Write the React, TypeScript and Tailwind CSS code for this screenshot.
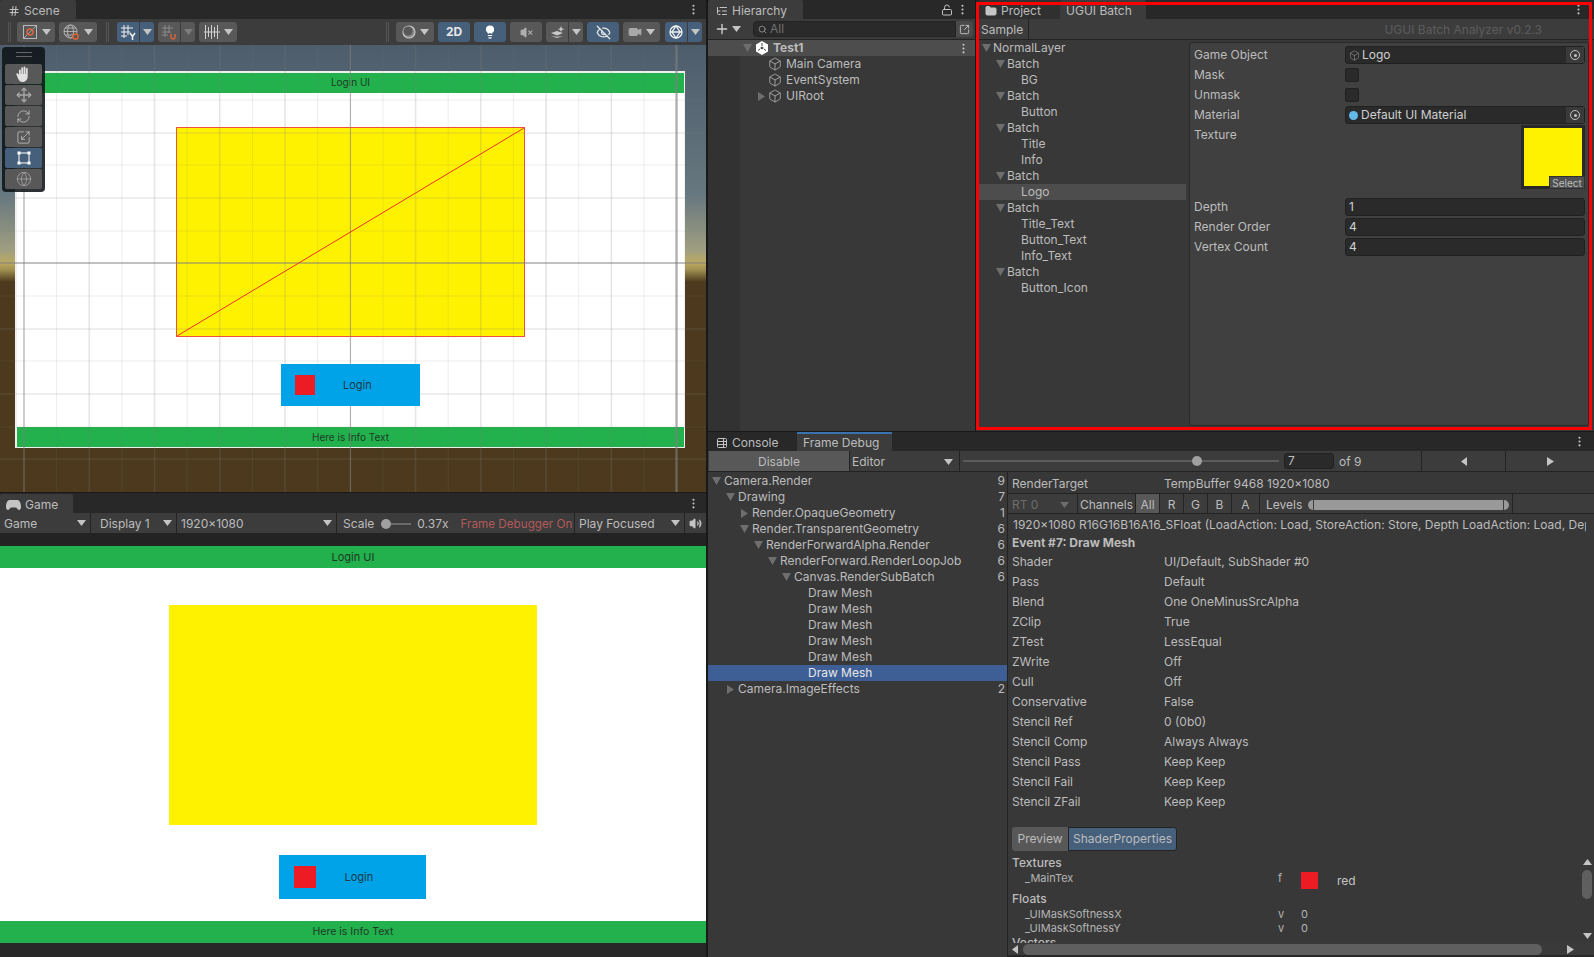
import { ReactNode } from 'react';
import { Box, EllipsisVertical, Hash, ListTree, LockOpen, Plus, Search, Folder, SquareArrowOutUpRight, Volume2, TableProperties, Move, RefreshCw, Scaling, Video, EyeOff, Lightbulb, VolumeX, Globe } from 'lucide-react';

function Down({ className = 'fill-[#c4c4c4]' }: { className?: string }) {
  return (
    <svg width="9" height="6" viewBox="0 0 9 6" className={`shrink-0 ${className}`}>
      <polygon points="0,0 9,0 4.5,6" />
    </svg>
  );
}

function TreeDown() {
  return (
    <svg width="9" height="8" viewBox="0 0 9 8" className="shrink-0 fill-[#6e6e6e]">
      <polygon points="0,0 9,0 4.5,8" />
    </svg>
  );
}

function Right({ className = 'fill-[#6e6e6e]' }: { className?: string }) {
  return (
    <svg width="7" height="9" viewBox="0 0 7 9" className={`shrink-0 ${className}`}>
      <polygon points="0,0 7,4.5 0,9" />
    </svg>
  );
}

function Left({ className = 'fill-[#c4c4c4]' }: { className?: string }) {
  return (
    <svg width="6" height="9" viewBox="0 0 6 9" className={`shrink-0 ${className}`}>
      <polygon points="6,0 0,4.5 6,9" />
    </svg>
  );
}

function Grip() {
  return <div className="h-5 w-[3px] shrink-0 border-x border-[#555]" />;
}

function Tab({ active, children, className = '' }: { active?: boolean; children: ReactNode; className?: string }) {
  return (
    <div className={`flex h-[19px] items-center gap-1 rounded-t-[2px] pt-[2px] ${active ? 'bg-[#3c3c3c]' : ''} ${className}`}>
      {children}
    </div>
  );
}

function ToolBtn({ blue, className = '', children }: { blue?: boolean; className?: string; children: ReactNode }) {
  return (
    <div className={`flex h-5 shrink-0 items-center justify-center gap-1 rounded-[3px] ${blue ? 'bg-[#46607c]' : 'bg-[#585858]'} ${className}`}>
      {children}
    </div>
  );
}

function SplitBtn({ blue, w, children, dim }: { blue?: boolean; w: string; children: ReactNode; dim?: boolean }) {
  return (
    <div className={`flex h-5 shrink-0 overflow-hidden rounded-[3px] ${w}`}>
      <div className={`flex flex-1 items-center justify-center ${blue ? 'bg-[#46607c]' : 'bg-[#585858]'}`}>{children}</div>
      <div className={`ml-px flex w-[14px] items-center justify-center ${blue ? 'bg-[#46607c]' : 'bg-[#585858]'}`}>
        <Down className={dim ? 'fill-[#7c7c7c]' : 'fill-[#c4c4c4]'} />
      </div>
    </div>
  );
}

const gridXs = Array.from({ length: 21 }, (_, i) => 24 + i * 32.63);
const gridYs = [55, 88, 120, 153, 186, 218, 251, 284, 316, 349, 382, 414];

function SceneGrid() {
  return (
    <svg className="absolute inset-0" width="706" height="447" viewBox="0 0 706 447">
      {gridXs.map((x, i) => (
        <line key={x} x1={x} y1="0" x2={x} y2="447" stroke="#808080" strokeOpacity={i % 2 === 0 ? 0.2 : 0.14} strokeWidth={i % 2 === 0 ? 1.6 : 1} />
      ))}
      {gridYs.map((y, i) => (
        <line key={y} x1="0" y1={y} x2="706" y2={y} stroke="#808080" strokeOpacity={i % 2 === 0 ? 0.14 : 0.18} strokeWidth={i % 2 === 0 ? 1 : 1.6} />
      ))}
      <line x1="24" y1="0" x2="24" y2="447" stroke="#808080" strokeOpacity="0.55" strokeWidth="1" />
      <line x1="350.5" y1="0" x2="350.5" y2="447" stroke="#808080" strokeOpacity="0.5" strokeWidth="1" />
      <line x1="676.5" y1="0" x2="676.5" y2="447" stroke="#808080" strokeOpacity="0.55" strokeWidth="2.4" />
      <line x1="0" y1="218" x2="706" y2="218" stroke="#808080" strokeOpacity="0.55" strokeWidth="1.6" />
      <line x1="177" y1="291" x2="524" y2="83" stroke="#ee3030" strokeWidth="1" />
    </svg>
  );
}

function PaletteBtn({ blue, children }: { blue?: boolean; children: ReactNode }) {
  return (
    <div className={`flex h-5 w-[37px] items-center justify-center rounded-[2px] ${blue ? 'bg-[#46607c]' : 'bg-[#585858]'}`}>{children}</div>
  );
}

function Palette() {
  const icon = 'text-[#c8c8c8]';
  return (
    <div className="absolute left-[2px] top-[2px] flex w-[43px] flex-col items-center gap-px rounded-[4px] bg-[#0f1418e0] pb-[3px] pt-[5px]">
      <div className="mb-[6px] h-[5px] w-4 border-y border-[#666]" />
      <PaletteBtn>
        <svg width="15" height="16" viewBox="0 0 15 16" className="fill-[#e0e0e0]">
          <path d="M3 4.5a.9.9 0 0 1 1.8 0V8h.5V2.2a.9.9 0 0 1 1.8 0V8h.5V1.4a.9.9 0 0 1 1.8 0V8h.5V3a.9.9 0 0 1 1.8 0V10c0 3.5-2 6-5 6-2.4 0-3.4-1.2-4.4-3L.4 8.6c-.5-1 .9-1.9 1.6-1L3 9Z" />
        </svg>
      </PaletteBtn>
      <PaletteBtn><Move size={16} className="text-[#a8a8a8]" /></PaletteBtn>
      <PaletteBtn><RefreshCw size={15} strokeWidth={1.2} className={icon} /></PaletteBtn>
      <PaletteBtn><Scaling size={15} strokeWidth={1.2} className={icon} /></PaletteBtn>
      <PaletteBtn blue>
        <svg width="14" height="14" viewBox="0 0 14 14" className="fill-white stroke-white">
          <path d="M2 2H12V12H2Z" fill="none" strokeWidth="1" />
          <rect x="0.5" y="0.5" width="3" height="3" strokeWidth="0" />
          <rect x="10.5" y="0.5" width="3" height="3" strokeWidth="0" />
          <rect x="0.5" y="10.5" width="3" height="3" strokeWidth="0" />
          <rect x="10.5" y="10.5" width="3" height="3" strokeWidth="0" />
        </svg>
      </PaletteBtn>
      <PaletteBtn><Globe size={16} strokeWidth={1.2} className="text-[#a8a8a8]" /></PaletteBtn>
    </div>
  );
}

function SceneToolbar() {
  return (
    <div className="flex h-[26px] items-center bg-[#3c3c3c] pl-2 pr-1">
      <Grip />
      <ToolBtn className="ml-[6px] w-[38px]">
        <svg width="16" height="16" viewBox="0 0 16 16" fill="none" stroke="#b8b8b8">
          <rect x="1.5" y="1.5" width="13" height="13" />
          <path d="M2 14 14 2" strokeWidth="0.8" />
          <circle cx="8" cy="8" r="3" stroke="#e0643a" strokeWidth="1.5" />
        </svg>
        <Down />
      </ToolBtn>
      <ToolBtn className="ml-1 w-[38px]">
        <svg width="17" height="17" viewBox="0 0 17 17" fill="none" stroke="#b8b8b8" strokeWidth="0.9">
          <circle cx="7.5" cy="7.5" r="6.5" />
          <ellipse cx="7.5" cy="7.5" rx="3" ry="6.5" />
          <path d="M1 7.5H14M2 4H13M2 11H13" />
          <circle cx="12.5" cy="12.5" r="2.6" fill="#585858" stroke="#e0643a" strokeWidth="1.5" />
        </svg>
        <Down />
      </ToolBtn>
      <div className="ml-[9px]"><Grip /></div>
      <div className="ml-[8px]"><SplitBtn blue w="w-[37px]">
        <svg width="15" height="15" viewBox="0 0 15 15" fill="none" stroke="#f0f0f0" strokeWidth="1">
          <path d="M3 0V13M7 0V10M0 3H12M0 7H9M0 11H6" />
          <path d="M9 8 11.5 11.5 14 8M11.5 11.5V15" strokeWidth="1.5" />
        </svg>
      </SplitBtn></div>
      <div className="ml-1"><SplitBtn w="w-[37px]" dim>
        <svg width="15" height="15" viewBox="0 0 15 15" fill="none" stroke="#8a8a8a" strokeWidth="1">
          <path d="M3 0V12M7 0V8M0 3H11M0 7H9M0 10H6" />
          <path d="M9 9V12A2 2 0 0 0 13 12V9" stroke="#d2643a" strokeWidth="1.5" />
        </svg>
      </SplitBtn></div>
      <ToolBtn className="ml-1 w-[38px]">
        <svg width="16" height="14" viewBox="0 0 16 14" fill="none" stroke="#d0d0d0" strokeWidth="1">
          <path d="M1.5 0V14M4.5 2V12M7.5 0V14M10.5 2V12M13.5 0V14M0 7H16" />
        </svg>
        <Down />
      </ToolBtn>
      <div className="flex-1" />
      <Grip />
      <ToolBtn className="ml-[7px] w-[38px]">
        <svg width="14" height="14" viewBox="0 0 14 14" fill="none">
          <circle cx="7" cy="7" r="6" stroke="#c4c4c4" strokeWidth="1.2" fill="#8a8a8a" />
          <circle cx="6" cy="6" r="4.6" fill="#585858" />
        </svg>
        <Down />
      </ToolBtn>
      <ToolBtn blue className="ml-1 w-[32px] text-[12px] font-bold text-[#e8e8e8]">2D</ToolBtn>
      <ToolBtn blue className="ml-1 w-[32px]"><Lightbulb size={14} className="fill-white text-white" /></ToolBtn>
      <ToolBtn className="ml-1 w-[32px]"><VolumeX size={13} className="fill-[#b0b0b0] text-[#b0b0b0]" /></ToolBtn>
      <div className="ml-1"><SplitBtn w="w-[37px]">
        <svg width="15" height="14" viewBox="0 0 15 14" fill="#c8c8c8">
          <path d="M1 8 7 6 13 8 7 10.5Z" />
          <path d="M1 11 7 13 13 11 7 11.8Z" />
          <path d="M11 1 12 3.5 14.5 4 12 5 11 7 10 5 7.5 4 10 3.5Z" />
        </svg>
      </SplitBtn></div>
      <ToolBtn blue className="ml-1 w-[32px]"><EyeOff size={15} className="text-[#e8e8e8]" /></ToolBtn>
      <ToolBtn className="ml-1 w-[37px]"><Video size={14} className="fill-[#a8a8a8] text-[#a8a8a8]" /><Down /></ToolBtn>
      <div className="ml-[5px]"><SplitBtn blue w="w-[37px]">
        <svg width="16" height="16" viewBox="0 0 16 16" fill="none" stroke="#f0f0f0" strokeWidth="1.3">
          <circle cx="8" cy="8" r="6" />
          <path d="M8 2 12 8 8 14 4 8Z" />
          <path d="M2 8H14" />
        </svg>
      </SplitBtn></div>
    </div>
  );
}

function SceneView() {
  return (
    <div className="relative h-[447px] overflow-hidden bg-[linear-gradient(180deg,#4e5d6c_0%,#66777f_33.5%,#a09f80_46%,#bba960_48.8%,#a08f50_50.3%,#4d3a1e_53%,#4d3a1e_100%)]">
      <div className="absolute left-[15px] top-[26px] flex h-[377px] w-[670px] flex-col justify-between border-b border-l-2 border-r border-t-2 border-[#f0f0f0] bg-white">
        <div className="flex h-5 items-center justify-center bg-[#22b14c] pb-[2px] text-[10px] text-[#1e3a26]">Login UI</div>
        <div className="flex h-5 items-center justify-center bg-[#22b14c] text-[10px] text-[#1e3a26]">Here is Info Text</div>
      </div>
      <div className="absolute left-[176px] top-[82px] h-[210px] w-[349px] border border-[#ee5040] bg-[#fff200]" />
      <SceneGrid />
      <div className="absolute left-[281px] top-[319px] flex h-[42px] w-[139px] items-center bg-[#00a2e8] pl-[14px] text-[11px] text-[#1e3a46]">
        <div className="h-5 w-5 bg-[#ed1c24]" />
        <div className="ml-[28px]">Login</div>
      </div>
      <Palette />
    </div>
  );
}

function PanelHeader({ children }: { children: ReactNode }) {
  return (
    <div className="flex h-[19px] shrink-0 items-center bg-[#282828]">
      {children}
      <div className="flex-1" />
      <EllipsisVertical size={13} className="mr-[6px] text-[#c4c4c4]" />
    </div>
  );
}

function Dropdown({ w, label, dim, pad = 'pl-1' }: { w: string; label: string; dim?: boolean; pad?: string }) {
  return (
    <div className={`flex h-5 shrink-0 items-center justify-between border-r border-[#232323] pr-1 ${pad} ${w} ${dim ? 'text-[#707070]' : ''}`}>
      <span className="truncate pt-[2px]">{label}</span>
      <Down className={dim ? 'fill-[#707070]' : 'fill-[#c4c4c4]'} />
    </div>
  );
}

function GameView() {
  return (
    <div className="flex h-[464px] flex-col bg-[#282828] pt-px">
      <PanelHeader>
        <Tab active className="w-[73px] pl-[6px]">
          <svg width="15" height="10" viewBox="0 0 15 10" className="fill-[#c4c4c4]">
            <path d="M3.5 0H11.5C13.5 0 15 3 15 7 15 9 14 10 13 10 11.5 10 11 7.5 10 7.5H5C4 7.5 3.5 10 2 10 1 10 0 9 0 7 0 3 1.5 0 3.5 0Z" />
          </svg>
          <span>Game</span>
        </Tab>
      </PanelHeader>
      <div className="flex h-[21px] shrink-0 items-center border-b border-[#232323] bg-[#3c3c3c]">
        <Dropdown w="w-[91px]" label="Game" />
        <Dropdown w="w-[86px]" label="Display 1" pad="pl-[9px]" />
        <Dropdown w="w-[160px]" label="1920x1080" />
        <div className="flex h-5 w-[238px] shrink-0 items-center border-r border-[#232323] pl-[6px] pt-[2px]">
          <span>Scale</span>
          <div className="relative ml-[7px] flex h-3 w-[30px] items-center">
            <div className="h-[2px] w-full bg-[#6a6a6a]" />
            <div className="absolute left-0 h-[10px] w-[10px] rounded-full bg-[#a0a0a0]" />
          </div>
          <span className="ml-[6px]">0.37x</span>
          <span className="ml-[12px] whitespace-nowrap text-[11.7px] text-[#b35a5a]">Frame Debugger On</span>
        </div>
        <Dropdown w="w-[110px]" label="Play Focused" />
        <div className="flex flex-1 items-center justify-center"><Volume2 size={13} className="fill-[#c4c4c4] text-[#c4c4c4]" /></div>
      </div>
      <div className="h-3 shrink-0 bg-[#232323]" />
      <div className="flex h-[397px] shrink-0 flex-col items-center bg-white text-[11px] text-[#1e3a26]">
        <div className="flex h-[22px] w-full items-center justify-center bg-[#22b14c]">Login UI</div>
        <div className="mt-[37px] h-[220px] w-[368px] bg-[#fff200]" />
        <div className="mr-[2px] mt-[30px] flex h-[44px] w-[147px] items-center bg-[#00a2e8] pl-[15px] text-[#1e3a46]">
          <div className="h-[22px] w-[22px] bg-[#ed1c24]" />
          <div className="ml-[29px]">Login</div>
        </div>
        <div className="flex-1" />
        <div className="flex h-[22px] w-full items-center justify-center bg-[#22b14c] text-[10.5px]">Here is Info Text</div>
      </div>
    </div>
  );
}

const indent: Record<number, string> = {
  0: 'pl-[1px]',
  1: 'pl-[15px]',
  2: 'pl-[29px]',
  3: 'pl-[43px]',
  4: 'pl-[57px]',
  5: 'pl-[71px]',
  6: 'pl-[85px]',
  7: 'pl-[99px]',
};

type Node = { d: number; t: string; arrow?: 'down' | 'right'; n?: number; sel?: boolean };

function TreeRow({ node, selectedClass, arrowW = 'w-[14px]' }: { node: Node; selectedClass: string; arrowW?: string }) {
  return (
    <div className={`flex h-4 items-center leading-4 ${indent[node.d]} ${node.sel ? selectedClass : ''}`}>
      <div className={`flex shrink-0 items-center justify-center ${arrowW}`}>
        {node.arrow === 'down' && <TreeDown />}
        {node.arrow === 'right' && <Right />}
      </div>
      <span className="whitespace-nowrap">{node.t}</span>
      {node.n !== undefined && <span className="ml-auto pr-[2px]">{node.n}</span>}
    </div>
  );
}

function Hierarchy() {
  const cube = <Box size={14} strokeWidth={1.2} className="mr-[4px] shrink-0 text-[#c4c4c4]" />;
  return (
    <div className="flex h-full w-[267px] shrink-0 flex-col bg-[#383838]">
      <div className="flex h-[19px] items-center bg-[#282828]">
        <Tab active className="w-[95px] pl-2">
          <ListTree size={12} className="text-[#c4c4c4]" />
          <span>Hierarchy</span>
        </Tab>
        <div className="flex-1" />
        <LockOpen size={12} className="mr-[3px] text-[#c4c4c4]" />
        <EllipsisVertical size={13} className="mr-[6px] text-[#c4c4c4]" />
      </div>
      <div className="flex h-[21px] items-center border-b border-[#232323] bg-[#3c3c3c] pl-[6px]">
        <Plus size={16} className="text-[#d0d0d0]" />
        <Down className="ml-[2px] fill-[#c4c4c4]" />
        <div className="ml-[12px] flex h-[16px] w-[203px] items-center rounded-l-[4px] border border-[#232323] bg-[#2a2a2a] pl-1 text-[#707070]">
          <Search size={9} className="mr-[3px] text-[#a0a0a0]" />
          All
        </div>
        <div className="flex h-[16px] w-[17px] items-center justify-center rounded-r-[4px] bg-[#4a4a4a]">
          <SquareArrowOutUpRight size={11} className="text-[#c4c4c4]" />
        </div>
      </div>
      <div className="flex h-4 items-center bg-[#4d4d4d] pl-[32px]">
        <div className="flex w-[15px] justify-center"><TreeDown /></div>
        <svg width="14" height="14" viewBox="0 0 14 14" className="mr-[4px] shrink-0 fill-white">
          <path d="M7 0 13 3.5V10.5L7 14 1 10.5V3.5ZM7 5.5 5 7 7 8.5 9 7Z" fillRule="evenodd" />
          <path d="M7 2V5M3 9.5 5 8M11 9.5 9 8" stroke="#4d4d4d" strokeWidth="1" />
        </svg>
        <span className="font-bold">Test1</span>
        <div className="flex-1" />
        <EllipsisVertical size={13} className="mr-[5px] text-[#c4c4c4]" />
      </div>
      <div className="flex flex-1">
        <div className="w-[32px] bg-[#323232]" />
        <div className="flex-1">
          <div className="flex h-4 items-center pl-[28px]">{cube}Main Camera</div>
          <div className="flex h-4 items-center pl-[28px]">{cube}EventSystem</div>
          <div className="flex h-4 items-center pl-[14px]">
            <div className="flex w-[14px] shrink-0 justify-center"><Right /></div>
            {cube}UIRoot
          </div>
        </div>
      </div>
    </div>
  );
}

const batchTree: Node[] = [
  { d: 0, t: 'NormalLayer', arrow: 'down' },
  { d: 1, t: 'Batch', arrow: 'down' },
  { d: 2, t: 'BG' },
  { d: 1, t: 'Batch', arrow: 'down' },
  { d: 2, t: 'Button' },
  { d: 1, t: 'Batch', arrow: 'down' },
  { d: 2, t: 'Title' },
  { d: 2, t: 'Info' },
  { d: 1, t: 'Batch', arrow: 'down' },
  { d: 2, t: 'Logo', sel: true },
  { d: 1, t: 'Batch', arrow: 'down' },
  { d: 2, t: 'Title_Text' },
  { d: 2, t: 'Button_Text' },
  { d: 2, t: 'Info_Text' },
  { d: 1, t: 'Batch', arrow: 'down' },
  { d: 2, t: 'Button_Icon' },
];

function Field({ label, children }: { label: string; children: ReactNode }) {
  return (
    <div className="flex h-5 items-center">
      <div className="w-[155px] shrink-0 pl-[4px]">{label}</div>
      {children}
    </div>
  );
}

function Input({ children, picker }: { children: ReactNode; picker?: boolean }) {
  return (
    <div className="flex h-[18px] w-[240px] items-center rounded-[3px] border border-[#212121] bg-[#2a2a2a] pl-[3px] text-[#d0d0d0]">
      {children}
      {picker && (
        <div className="ml-auto flex h-full w-[18px] items-center justify-center bg-[#3a3a3a]">
          <div className="flex h-[10px] w-[10px] items-center justify-center rounded-full border border-[#c4c4c4]">
            <div className="h-[3px] w-[3px] rounded-full bg-[#c4c4c4]" />
          </div>
        </div>
      )}
    </div>
  );
}

function BatchPanel() {
  const check = <div className="h-[14px] w-[14px] rounded-[2px] border border-[#212121] bg-[#2a2a2a]" />;
  return (
    <div className="relative flex h-full min-w-0 flex-1 flex-col bg-[#383838]">
      <div className="flex h-[19px] items-center bg-[#282828] pl-[3px]">
        <Tab className="w-[81px] bg-[#303030] pl-[6px]">
          <Folder size={12} className="fill-[#c4c4c4] text-[#c4c4c4]" />
          <span>Project</span>
        </Tab>
        <Tab active className="w-[86px] pl-[6px]">UGUI Batch</Tab>
        <div className="flex-1" />
        <EllipsisVertical size={13} className="mr-[9px] text-[#c4c4c4]" />
      </div>
      <div className="flex h-[21px] items-center border-b border-[#232323] bg-[#3c3c3c] pl-[2px]">
        <div className="flex h-full w-[51px] items-center border-r border-[#232323] pl-[3px] pt-[2px]">Sample</div>
        <div className="ml-auto mr-[52px] whitespace-nowrap pt-[2px] text-[#5c5c5c]">UGUI Batch Analyzer v0.2.3</div>
      </div>
      <div className="flex min-h-0 flex-1 pl-[2px]">
        <div className="w-[208px] shrink-0">
          {batchTree.map((n, i) => (
            <TreeRow key={i} node={n} selectedClass="bg-[#4d4d4d]" />
          ))}
        </div>
        <div className="mb-[5px] ml-[3px] mr-[5px] mt-[2px] min-w-0 flex-1 rounded-[3px] border border-[#2a2a2a] bg-[#404040] pt-[2px]">
          <Field label="Game Object">
            <Input picker><Box size={11} strokeWidth={1} className="mr-[2px] text-[#b0b0b0]" />Logo</Input>
          </Field>
          <Field label="Mask">{check}</Field>
          <Field label="Unmask">{check}</Field>
          <Field label="Material">
            <Input picker>
              <div className="mr-[3px] h-[9px] w-[9px] rounded-full bg-[#62b8e8]" />
              Default UI Material
            </Input>
          </Field>
          <div className="flex h-[72px]">
            <div className="w-[155px] pl-[4px] pt-[2px]">Texture</div>
            <div className="ml-auto mr-[3px] h-[64px] w-[64px] border-[3px] border-[#282828] bg-[#fff200]">
              <div className="ml-[25px] mt-[48px] flex h-[13px] w-[36px] items-center justify-center border border-[#303030] bg-[#505050] text-[10px] leading-none">Select</div>
            </div>
          </div>
          <Field label="Depth"><Input>1</Input></Field>
          <Field label="Render Order"><Input>4</Input></Field>
          <Field label="Vertex Count"><Input>4</Input></Field>
        </div>
      </div>
      <div className="pointer-events-none absolute bottom-px left-0 right-[2px] top-[2px] border-[3px] border-[#f00]" />
    </div>
  );
}

const frameTree: Node[] = [
  { d: 0, t: 'Camera.Render', arrow: 'down', n: 9 },
  { d: 1, t: 'Drawing', arrow: 'down', n: 7 },
  { d: 2, t: 'Render.OpaqueGeometry', arrow: 'right', n: 1 },
  { d: 2, t: 'Render.TransparentGeometry', arrow: 'down', n: 6 },
  { d: 3, t: 'RenderForwardAlpha.Render', arrow: 'down', n: 6 },
  { d: 4, t: 'RenderForward.RenderLoopJob', arrow: 'down', n: 6 },
  { d: 5, t: 'Canvas.RenderSubBatch', arrow: 'down', n: 6 },
  { d: 6, t: 'Draw Mesh' },
  { d: 6, t: 'Draw Mesh' },
  { d: 6, t: 'Draw Mesh' },
  { d: 6, t: 'Draw Mesh' },
  { d: 6, t: 'Draw Mesh' },
  { d: 6, t: 'Draw Mesh', sel: true },
  { d: 1, t: 'Camera.ImageEffects', arrow: 'right', n: 2 },
];

const eventRows = [
  ['Shader', 'UI/Default, SubShader #0'],
  ['Pass', 'Default'],
  ['Blend', 'One OneMinusSrcAlpha'],
  ['ZClip', 'True'],
  ['ZTest', 'LessEqual'],
  ['ZWrite', 'Off'],
  ['Cull', 'Off'],
  ['Conservative', 'False'],
  ['Stencil Ref', '0 (0b0)'],
  ['Stencil Comp', 'Always Always'],
  ['Stencil Pass', 'Keep Keep'],
  ['Stencil Fail', 'Keep Keep'],
  ['Stencil ZFail', 'Keep Keep'],
];

function ChannelBtn({ label, active, w }: { label: string; active?: boolean; w: string }) {
  return (
    <div className={`flex h-full ${w} items-center justify-center border-r border-[#232323] ${active ? 'bg-[#585858]' : ''}`}>{label}</div>
  );
}

function PropRow({ name, type, children }: { name: string; type: string; children: ReactNode }) {
  return (
    <div className="grid h-[14px] grid-cols-[253px_23px_1fr] items-center pl-[17px] text-[11px] leading-[14px] text-[#b4b4b4]">
      <span>{name}</span>
      <span>{type}</span>
      {children}
    </div>
  );
}

function FrameDetail() {
  return (
    <div className="relative flex min-w-0 flex-1 flex-col overflow-hidden border-l border-[#232323] [&>*]:shrink-0">
      <div className="grid h-[21px] grid-cols-[152px_1fr] items-center pl-1 pt-[3px]">
        <span>RenderTarget</span>
        <span>TempBuffer 9468 1920x1080</span>
      </div>
      <div className="flex h-[21px] items-center border-y border-[#232323] bg-[#3c3c3c] [&>div]:pt-[2px]">
        <div className="flex h-full w-[70px] items-center justify-between border-r border-[#232323] pl-1 pr-2 text-[#6c6c6c]">
          RT 0<Down className="fill-[#6c6c6c]" />
        </div>
        <div className="flex h-full w-[58px] items-center justify-center border-r border-[#232323]">Channels</div>
        <ChannelBtn label="All" active w="w-6" />
        <ChannelBtn label="R" w="w-6" />
        <ChannelBtn label="G" w="w-6" />
        <ChannelBtn label="B" w="w-6" />
        <ChannelBtn label="A" w="w-7" />
        <div className="flex h-full w-[253px] items-center border-r border-[#232323] pl-[6px]">
          Levels
          <div className="ml-[6px] flex h-[10px] w-[201px] gap-px">
            <div className="w-[5px] rounded-l-[5px] bg-[#999]" />
            <div className="flex-1 bg-[#999]" />
            <div className="w-[5px] rounded-r-[5px] bg-[#999]" />
          </div>
        </div>
      </div>
      <div className="mr-2 flex h-5 items-center overflow-hidden whitespace-nowrap pl-[5px] pt-[2px]">
        1920x1080 R16G16B16A16_SFloat (LoadAction: Load, StoreAction: Store, Depth LoadAction: Load, Depth StoreAction: Store)
      </div>
      <div className="flex h-[18px] items-center pl-1 font-bold">Event #7: Draw Mesh</div>
      {eventRows.map(([k, v]) => (
        <div key={k} className="grid h-5 grid-cols-[152px_1fr] items-center pl-1">
          <span>{k}</span>
          <span>{v}</span>
        </div>
      ))}
      <div className="ml-1 mt-[15px] flex h-[24px] w-[165px]">
        <div className="flex w-[56px] items-center justify-center rounded-l-[3px] bg-[#585858]">Preview</div>
        <div className="flex flex-1 items-center justify-center rounded-r-[3px] border border-[#232323] bg-[#46607c]">ShaderProperties</div>
      </div>
      <div className="h-[92px] overflow-hidden pl-1 pt-1">
        <div className="flex h-4 items-center font-medium">Textures</div>
        <div className="grid h-[20px] grid-cols-[253px_23px_1fr] items-start pl-[13px] text-[11px] text-[#b4b4b4]">
          <span className="-mt-px">_MainTex</span>
          <span className="-mt-px">f</span>
          <span className="flex items-center pt-px">
            <span className="h-[17px] w-[17px] bg-[#ed1c24]" />
            <span className="ml-[19px] text-[12px] text-[#c4c4c4]">red</span>
          </span>
        </div>
        <div className="flex h-4 items-center font-medium">Floats</div>
        <div className="-ml-1">
          <PropRow name="_UIMaskSoftnessX" type="v">0</PropRow>
          <PropRow name="_UIMaskSoftnessY" type="v">0</PropRow>
        </div>
        <div className="font-medium">Vectors</div>
      </div>
      {/* scrollbars */}
      <div className="absolute bottom-[14px] right-0 flex h-[88px] w-[14px] flex-col items-center bg-[#383838] py-1">
        <Down className="rotate-180 fill-[#c4c4c4]" />
        <div className="mt-[5px] h-[29px] w-[10px] rounded-[5px] bg-[#5f5f5f]" />
        <div className="flex-1" />
        <Down className="fill-[#c4c4c4]" />
      </div>
      <div className="flex h-[12px] items-center bg-[#3a3a3a] pl-1">
        <Left />
        <div className="ml-[5px] h-[11px] w-[519px] flex-none rounded-[6px] bg-[#5f5f5f]" />
        <Right className="ml-[25px] fill-[#c4c4c4]" />
      </div>
      <div className="h-[2px] bg-[#282828]" />
    </div>
  );
}

function FrameDebug() {
  return (
    <div className="flex h-[525px] flex-col bg-[#383838]">
      <div className="flex h-[19px] shrink-0 items-center bg-[#282828]">
        <Tab className="w-[89px] pl-[8px]">
          <TableProperties size={12} className="text-[#c4c4c4]" />
          <span>Console</span>
        </Tab>
        <div className="flex h-[19px] w-[95px] items-center border-t-2 border-[#3a72b0] bg-[#3c3c3c] pl-[6px]">Frame Debug</div>
        <div className="flex-1" />
        <EllipsisVertical size={13} className="mr-[8px] text-[#c4c4c4]" />
      </div>
      <div className="flex h-[21px] shrink-0 items-center border-b border-[#232323] bg-[#3c3c3c] pl-px">
        <div className="flex h-5 w-[140px] items-center justify-center bg-[#585858] pt-[2px]">Disable</div>
        <div className="flex h-5 w-[111px] items-center justify-between border-x border-[#232323] pl-[2px] pr-[6px] pt-[2px]">
          Editor<Down />
        </div>
        <div className="relative ml-[3px] flex h-5 w-[316px] items-center">
          <div className="h-[2px] w-full bg-[#5c5c5c]" />
          <div className="absolute left-[229px] h-[10px] w-[10px] rounded-full bg-[#a0a0a0]" />
        </div>
        <div className="ml-[5px] flex h-4 w-[50px] items-center rounded-[3px] border border-[#212121] bg-[#2a2a2a] pl-[3px]">7</div>
        <div className="ml-[5px] w-[82px] pt-[2px]">of 9</div>
        <div className="flex h-5 w-[85px] items-center justify-center border-x border-[#232323]"><Left /></div>
        <div className="flex h-5 flex-1 items-center justify-center"><Right className="fill-[#c4c4c4]" /></div>
      </div>
      <div className="flex min-h-0 flex-1">
        <div className="w-[299px] shrink-0 pt-[1px]">
          {frameTree.map((n, i) => (
            <TreeRow key={i} node={n} arrowW="w-[15px]" selectedClass="bg-[#3e5f96] text-[#e8e8e8]" />
          ))}
        </div>
        <FrameDetail />
      </div>
    </div>
  );
}

export default function App() {
  return (
    <div className="flex h-[957px] w-[1594px] overflow-hidden bg-[#191919] font-[Inter,sans-serif] text-xs leading-4 text-[#bcbcbc]">
      <div className="flex w-[706px] shrink-0 flex-col gap-px">
        <div>
          <PanelHeader>
            <Tab active className="w-[76px] pl-2">
              <Hash size={12} className="text-[#c4c4c4]" />
              <span>Scene</span>
            </Tab>
          </PanelHeader>
          <SceneToolbar />
          <SceneView />
        </div>
        <GameView />
      </div>
      <div className="ml-[2px] flex w-[886px] min-w-0 flex-col gap-px">
        <div className="flex h-[431px] gap-px">
          <Hierarchy />
          <BatchPanel />
        </div>
        <FrameDebug />
      </div>
    </div>
  );
}
